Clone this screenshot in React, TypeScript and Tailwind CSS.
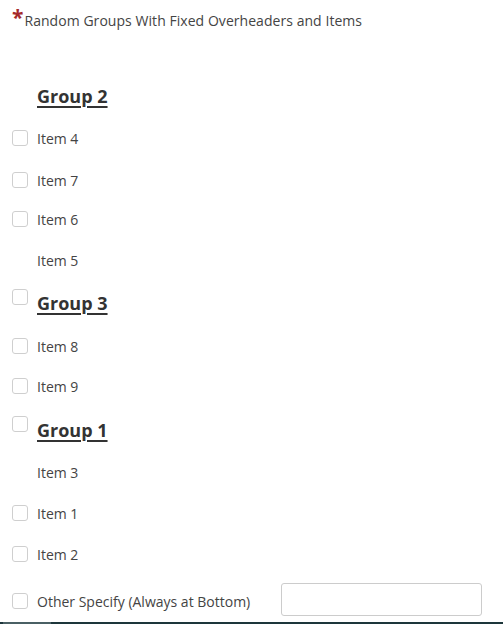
import React from "react";

const Box = ({ className = "" }: { className?: string }) => (
  <span className={"block w-[16px] h-[16px] shrink-0 rounded-[3px] border border-[#cfcfcf] bg-white " + className} />
);

const Item = ({ h, label, box = true }: { h: string; label: string; box?: boolean }) => (
  <div className={"flex items-start " + h}>
    <div className="flex h-[40px] items-center">
      {box ? <Box /> : <span className="block w-[16px] h-[16px]" />}
      <span className="ml-[9px] text-[14px] text-[#444]">{label}</span>
    </div>
  </div>
);

const Group = ({ h, label, box = true }: { h: string; label: string; box?: boolean }) => (
  <div className={"flex items-start " + h}>
    {box ? <Box className="mt-[6px]" /> : <span className="block w-[16px] h-[16px]" />}
    <div className="flex h-[40px] items-center ml-[9px]">
      <span className="text-[18px] font-bold text-[#333] underline underline-offset-[3px] decoration-[1.5px]">{label}</span>
    </div>
  </div>
);

export default function App() {
  return (
    <div className="w-[503px] h-[624px] bg-white overflow-hidden flex flex-col" style={{ fontFamily: '"Open Sans", sans-serif' }}>
      <div className="flex flex-col pl-[12px]">
        <div className="flex items-start h-[76px]">
          <div className="flex h-[40px] items-center">
            <span className="text-[21px] font-bold text-[#a52a2a] leading-none -mt-[6px]">*</span>
            <span className="text-[14px] text-[#444] ml-[1px] tracking-[0.05px]">Random Groups With Fixed Overheaders and Items</span>
          </div>
        </div>
        <Group h="h-[42px]" label="Group 2" box={false} />
        <Item h="h-[42px]" label="Item 4" />
        <Item h="h-[39px]" label="Item 7" />
        <Item h="h-[41px]" label="Item 6" />
        <Item h="h-[43px]" label="Item 5" box={false} />
        <Group h="h-[43px]" label="Group 3" />
        <Item h="h-[40px]" label="Item 8" />
        <Item h="h-[44px]" label="Item 9" />
        <Group h="h-[42px]" label="Group 1" />
        <Item h="h-[41px]" label="Item 3" box={false} />
        <Item h="h-[41px]" label="Item 1" />
        <Item h="h-[47px]" label="Item 2" />
        <div className="flex items-start h-[41px]">
          <div className="flex h-[40px] items-center">
            <Box />
            <span className="ml-[9px] w-[244px] text-[14px] text-[#444]">Other Specify (Always at Bottom)</span>
            <input type="text" className="w-[201px] h-[33px] -mt-[3px] rounded-[3px] border border-[#cccccc] bg-white outline-none" />
          </div>
        </div>
      </div>
      <div className="flex h-[2px] bg-[#1d363b]">
        <div className="ml-[3px] w-[48px] bg-[#4a6064]" />
      </div>
    </div>
  );
}
